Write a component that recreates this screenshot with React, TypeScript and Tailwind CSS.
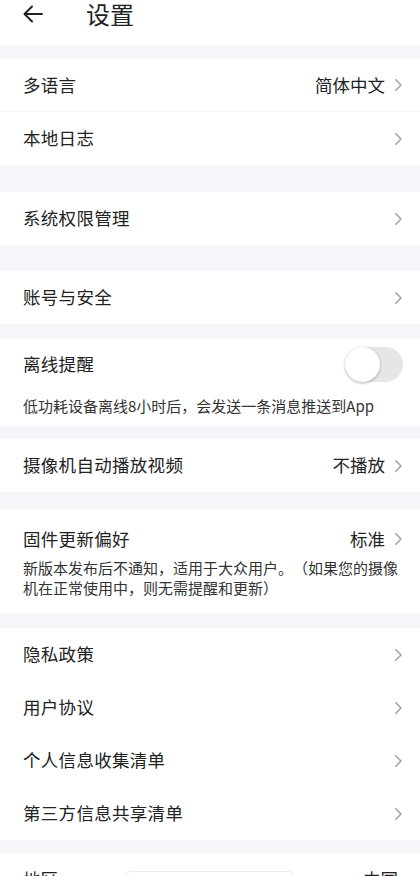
import React from "react";

const Chevron = () => (
  <svg width="9" height="14" viewBox="0 0 9 14" className="ml-[9px] shrink-0">
    <path d="M1.8 1.8 L7 7 L1.8 12.2" fill="none" stroke="#a0a0a0" strokeWidth="1.5" strokeLinecap="round" strokeLinejoin="round" />
  </svg>
);

const Row = ({ label, value, divider }: { label: string; value?: string; divider?: boolean }) => (
  <div className={`h-[53px] flex items-center justify-between pl-[23px] pr-[17px] ${divider ? "border-b border-[#f3f4f7]" : ""}`}>
    <span className="text-[17.5px] text-[#222] tracking-[0.3px]">{label}</span>
    <div className="flex items-center">
      {value && <span className="text-[17.5px] text-[#222]">{value}</span>}
      <Chevron />
    </div>
  </div>
);

const Gap = ({ h }: { h: string }) => <div className={`${h} bg-[#f5f6f9]`} />;

export default function App() {
  return (
    <div className="w-[420px] bg-white overflow-hidden relative [text-spacing-trim:space-all]" style={{ fontFamily: '"Noto Sans CJK SC", "Noto Sans", sans-serif' }}>
      <div className="h-[46px] flex items-start pl-[22px]">
        <svg width="22" height="20" viewBox="0 0 22 20" className="mt-[4px]">
          <path d="M20 10 H3 M10 2.5 L2.5 10 L10 17.5" fill="none" stroke="#222" strokeWidth="2" strokeLinecap="round" strokeLinejoin="round" />
        </svg>
        <span className="ml-[42px] text-[24px] leading-[28px] text-[#222]">设置</span>
      </div>
      <Gap h="h-[13px]" />
      <div>
        <Row label="多语言" value="简体中文" divider />
        <Row label="本地日志" />
      </div>
      <Gap h="h-[27px]" />
      <Row label="系统权限管理" />
      <Gap h="h-[26px]" />
      <Row label="账号与安全" />
      <Gap h="h-[14px]" />
      <div className="pl-[23px] pr-[17px] pt-[6px] pb-[10px]">
        <div className="flex items-center justify-between h-[40px]">
          <span className="text-[17.5px] text-[#222] tracking-[0.3px]">离线提醒</span>
          <div className="w-[58px] h-[35px] rounded-full bg-[#e6e6e6] relative">
            <div className="absolute left-0 top-0 w-[35px] h-[35px] rounded-full bg-white shadow-[0_1px_3px_rgba(0,0,0,0.3)]" />
          </div>
        </div>
        <div className="text-[15px] leading-[20px] text-[#333] mt-[12px]">低功耗设备离线8小时后，会发送一条消息推送到App</div>
      </div>
      <Gap h="h-[13px]" />
      <Row label="摄像机自动播放视频" value="不播放" />
      <Gap h="h-[17px]" />
      <div className="pl-[23px] pr-[17px] pt-[16px] pb-[17px]">
        <div className="flex items-center justify-between h-[28px]">
          <span className="text-[17.5px] text-[#222] tracking-[0.3px]">固件更新偏好</span>
          <div className="flex items-center">
            <span className="text-[17.5px] text-[#222]">标准</span>
            <Chevron />
          </div>
        </div>
        <div className="text-[15px] leading-[19.5px] text-[#333] mt-[5px]">新版本发布后不通知，适用于大众用户。（如果您的摄像机在正常使用中，则无需提醒和更新）</div>
      </div>
      <Gap h="h-[14px]" />
      <div>
        <Row label="隐私政策" />
        <Row label="用户协议" />
        <Row label="个人信息收集清单" />
        <Row label="第三方信息共享清单" />
      </div>
      <Gap h="h-[13px]" />
      <div className="h-[53px] flex items-center justify-between pl-[23px] pr-[22px]">
        <span className="text-[17.5px] text-[#222]">地区</span>
        <span className="text-[17.5px] text-[#222]">中国</span>
      </div>
      <div className="absolute left-[125px] top-[871px] w-[170px] h-[14px] rounded-[6px] border border-[#ececec]" />
    </div>
  );
}
